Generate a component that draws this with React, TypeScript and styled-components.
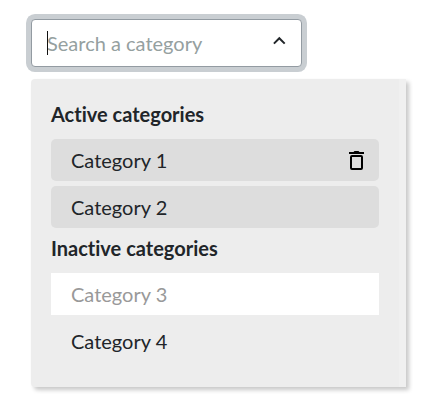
import React from "react";
import styled, { createGlobalStyle, keyframes } from "styled-components";

const GlobalStyle = createGlobalStyle`
  *, *::before, *::after { box-sizing: border-box; }
  body {
    margin: 0;
    background: #fff;
    color: #212529;
    font-family: Lato, "Open Sans", sans-serif;
    font-size: 20px;
    line-height: 30px;
    font-variant-ligatures: none;
  }
`;

const Page = styled.main`
  display: flex;
  flex-direction: column;
  gap: 12px;
  padding: 19px 32px 16px 31px;
`;

const Field = styled.div`
  position: relative;
  display: flex;
  align-items: center;
  max-width: 271px;
  height: 48px;
  padding: 0 10px 0 15px;
  background: #fff;
  border: 1px solid #939ba2;
  border-radius: 4px;
  box-shadow: 0 0 0 5px #c9ced2;
`;

const SearchInput = styled.input`
  flex: 1;
  min-width: 0;
  height: 30px;
  padding: 0;
  border: 0;
  outline: 0;
  background: transparent;
  color: #212529;
  caret-color: transparent;
  font: inherit;

  &::placeholder {
    color: #95a0a0;
    opacity: 1;
  }
`;

const blink = keyframes`
  0%, 70% { opacity: 1; }
  71%, 100% { opacity: 0; }
`;

const Caret = styled.span`
  position: absolute;
  left: 15px;
  top: 11px;
  width: 1px;
  height: 24px;
  background: #111;
  pointer-events: none;
  animation: ${blink} 60s step-end infinite;
`;

const IconButton = styled.button`
  display: flex;
  align-items: center;
  justify-content: center;
  width: 24px;
  height: 24px;
  padding: 0;
  border: 0;
  background: transparent;
  color: #000;
  cursor: pointer;
`;

const Panel = styled.section`
  padding: 20px;
  background: #ededed;
  border-right: 7px solid #f0f0f0;
  border-radius: 4px 0 0 4px;
  box-shadow: 3px 3px 4px #c8c8c8;
`;

const GroupTitle = styled.h2`
  margin: 0 0 10px;
  font-size: 20px;
  line-height: 30px;
  font-weight: 700;
`;

const List = styled.ul`
  margin: 0;
  padding: 0;
  list-style: none;
`;

type RowState = "active" | "hovered" | "plain";

const rowBackground: Record<RowState, string> = {
  active: "#dddddd",
  hovered: "#ffffff",
  plain: "transparent",
};

const Row = styled.li<{ $state: RowState }>`
  display: flex;
  align-items: center;
  height: 42px;
  margin-bottom: 5px;
  padding-right: 10px;
  background: ${(p) => rowBackground[p.$state]};
  border-radius: ${(p) => (p.$state === "active" ? "5px" : "0")};
`;

const RowButton = styled.button<{ $muted: boolean }>`
  flex: 1;
  height: 42px;
  padding: 0 20px;
  border: 0;
  background: transparent;
  color: ${(p) => (p.$muted ? "#999999" : "#212529")};
  font: inherit;
  font-variant-ligatures: none;
  text-align: left;
  cursor: pointer;
`;

const ChevronUp = () => (
  <svg width="16" height="16" viewBox="0 0 16 16" fill="none" aria-hidden="true">
    <path d="M2.9 8.6 8.3 3.2l5.4 5.4" stroke="#212529" strokeWidth="2" />
  </svg>
);

const TrashIcon = () => (
  <svg width="24" height="24" viewBox="0 0 24 24" fill="none" aria-hidden="true">
    <path d="M4 4h4.5l1-1h4l1 1H19v2H4z" fill="#000" />
    <rect x="6" y="8" width="11" height="13" rx="1" stroke="#000" strokeWidth="2" />
  </svg>
);

interface Category {
  name: string;
  state: RowState;
  removable?: boolean;
}

const groups: { title: string; items: Category[] }[] = [
  {
    title: "Active categories",
    items: [
      { name: "Category 1", state: "active", removable: true },
      { name: "Category 2", state: "active" },
    ],
  },
  {
    title: "Inactive categories",
    items: [
      { name: "Category 3", state: "hovered" },
      { name: "Category 4", state: "plain" },
    ],
  },
];

export default function App() {
  return (
    <>
      <GlobalStyle />
      <Page>
        <Field>
          <SearchInput type="text" placeholder="Search a category" aria-label="Search a category" />
          <Caret />
          <IconButton type="button" aria-label="Close list">
            <ChevronUp />
          </IconButton>
        </Field>
        <Panel>
          {groups.map((group) => (
            <React.Fragment key={group.title}>
              <GroupTitle>{group.title}</GroupTitle>
              <List aria-label={group.title}>
                {group.items.map((item) => (
                  <Row key={item.name} $state={item.state}>
                    <RowButton type="button" $muted={item.state === "hovered"}>
                      {item.name}
                    </RowButton>
                    {item.removable && (
                      <IconButton type="button" aria-label={`Remove ${item.name}`}>
                        <TrashIcon />
                      </IconButton>
                    )}
                  </Row>
                ))}
              </List>
            </React.Fragment>
          ))}
        </Panel>
      </Page>
    </>
  );
}
